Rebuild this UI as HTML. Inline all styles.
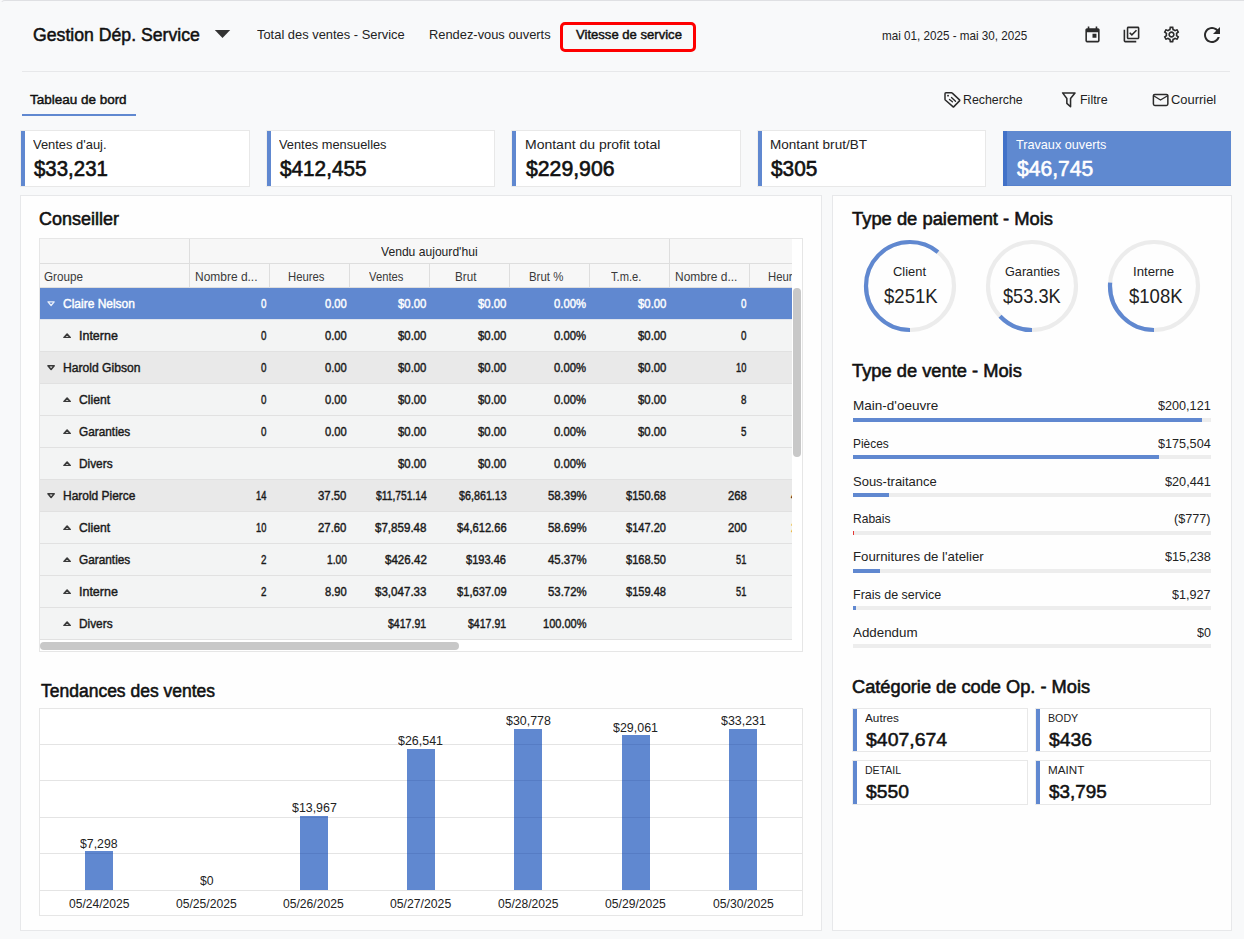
<!DOCTYPE html>
<html><head><meta charset="utf-8"><title>Gestion Dép. Service</title>
<style>
*{box-sizing:border-box;margin:0;padding:0}
html,body{width:1244px;height:939px;overflow:hidden}
body{background:#f8f9fa;font-family:"Liberation Sans",sans-serif;color:#111;position:relative}
.t{position:absolute;white-space:nowrap;line-height:1;transform-origin:0 0}
#frame{position:absolute;left:0;top:0;width:1300px;height:1000px;border-top:1px solid #dfe0e3;border-left:1px solid rgba(223,224,227,0);border-radius:5px 0 0 0}
</style></head><body>
<div id="frame"></div>
<span class="t" style="left:32.95px;top:26px;font-size:18.8px;color:#111;transform:scaleX(0.9401);-webkit-text-stroke:0.53px #111;">Gestion Dép. Service</span>
<svg style="position:absolute;left:212px;top:28px" width="22" height="12" viewBox="212 28 22 12"><path d="M214.800 29.900h15.400l-7.700 8.200z" fill="#333"/></svg>
<span class="t" style="left:256.60px;top:29px;font-size:12.8px;color:#222;transform:scaleX(1.0078);">Total des ventes - Service</span>
<span class="t" style="left:428.90px;top:29px;font-size:12.8px;color:#222;transform:scaleX(1.0054);">Rendez-vous ouverts</span>
<div style="position:absolute;left:560px;top:22px;width:136px;height:29.6px;border:3px solid #fe0000;border-radius:5px"></div>
<span class="t" style="left:575.82px;top:29px;font-size:12.8px;color:#111;transform:scaleX(1.0223);-webkit-text-stroke:0.44px #111;">Vitesse de service</span>
<span class="t" style="left:882.20px;top:30px;font-size:12.2px;color:#222;transform:scaleX(0.9571);">mai 01, 2025 - mai 30, 2025</span>
<svg style="position:absolute;left:1082.5px;top:25px" width="19" height="19" viewBox="0 0 24 24"><path fill="#2b2b2b" d="M19 4h-1V2h-2v2H8V2H6v2H5c-1.11 0-1.99.9-1.99 2L3 20c0 1.1.89 2 2 2h14c1.1 0 2-.9 2-2V6c0-1.1-.9-2-2-2zm0 16H5V9h14v11zm-7-9h5v5h-5z"/></svg>
<svg style="position:absolute;left:1122.3px;top:25px" width="19" height="19" viewBox="0 0 24 24"><path fill="#2b2b2b" d="M20 4v12H8V4h12m0-2H8c-1.1 0-2 .9-2 2v12c0 1.1.9 2 2 2h12c1.1 0 2-.9 2-2V4c0-1.1-.9-2-2-2zm-7.530 12L9 10.500l1.400-1.410 2.070 2.080L17.600 6 19 7.410 12.470 14zM4 6H2v14c0 1.100.9 2 2 2h14v-2H4V6z"/></svg>
<svg style="position:absolute;left:1162.1px;top:25px" width="19" height="19" viewBox="0 0 24 24"><path fill="#2b2b2b" d="M19.43 12.98c.04-.32.07-.64.07-.98 0-.34-.03-.66-.07-.98l2.110-1.650c.19-.15.24-.42.12-.64l-2-3.460c-.09-.16-.26-.25-.44-.25-.06 0-.12.010-.17.030l-2.490 1c-.52-.4-1.080-.73-1.690-.98l-.38-2.650C14.460 2.180 14.250 2 14 2h-4c-.25 0-.46.180-.49.420l-.38 2.650c-.61.250-1.170.59-1.690.98l-2.490-1c-.06-.02-.12-.03-.18-.03-.17 0-.34.090-.43.250l-2 3.460c-.13.220-.07.490.12.640l2.110 1.650c-.04.320-.07.650-.07.980 0 .33.030.66.070.98l-2.110 1.650c-.19.150-.24.420-.12.640l2 3.460c.09.160.26.250.44.250.06 0 .12-.01.17-.03l2.490-1c.52.4 1.080.73 1.690.98l.38 2.650c.03.240.24.420.49.420h4c.25 0 .46-.18.490-.42l.38-2.650c.61-.25 1.170-.59 1.690-.98l2.490 1c.06.020.12.030.18.030.17 0 .34-.09.43-.25l2-3.460c.12-.22.070-.49-.12-.64l-2.110-1.650zm-1.980-1.710c.04.310.05.520.05.730 0 .21-.02.430-.05.730l-.14 1.130.89.700 1.080.84-.7 1.210-1.270-.51-1.040-.42-.9.680c-.43.320-.84.560-1.250.73l-1.060.43-.16 1.130-.2 1.350h-1.400l-.19-1.350-.16-1.130-1.060-.43c-.43-.18-.83-.41-1.230-.71l-.91-.7-1.060.43-1.270.51-.7-1.210 1.080-.84.890-.7-.14-1.130c-.03-.31-.05-.54-.05-.74s.02-.43.050-.73l.14-1.130-.89-.7-1.080-.84.7-1.210 1.270.51 1.040.42.9-.68c.43-.32.840-.56 1.250-.73l1.060-.43.160-1.130.2-1.350h1.390l.19 1.350.16 1.130 1.060.43c.43.180.83.410 1.230.71l.91.7 1.060-.43 1.270-.51.7 1.210-1.070.85-.89.700.14 1.130zM12 8c-2.210 0-4 1.790-4 4s1.790 4 4 4 4-1.790 4-4-1.790-4-4-4zm0 6c-1.100 0-2-.9-2-2s.9-2 2-2 2 .9 2 2-.9 2-2 2z"/></svg>
<svg style="position:absolute;left:1200.2px;top:22.8px" width="24" height="24" viewBox="0 0 24 24"><path fill="#2b2b2b" d="M17.65 6.35C16.2 4.9 14.21 4 12 4c-4.420 0-7.990 3.580-7.990 8s3.570 8 7.990 8c3.730 0 6.840-2.550 7.730-6h-2.080c-.82 2.330-3.040 4-5.650 4-3.310 0-6-2.690-6-6s2.690-6 6-6c1.660 0 3.140.69 4.220 1.780L13 11h7V4l-2.350 2.350z"/></svg>
<div style="position:absolute;left:22px;top:71px;width:1208px;height:1px;background:#e7e8ea"></div>
<span class="t" style="left:30.33px;top:93px;font-size:13.6px;color:#111;transform:scaleX(0.9908);-webkit-text-stroke:0.46px #111;">Tableau de bord</span>
<div style="position:absolute;left:22px;top:114px;width:114px;height:2px;background:#6088d0"></div>
<svg style="position:absolute;left:940px;top:88px" width="240" height="24" viewBox="940 88 240 24"><g fill="none" stroke="#2b2b2b" stroke-width="1.5" stroke-linejoin="round" stroke-linecap="round">
<path d="M945.9 92.800h5.700q0.400 0 0.700 0.300l7.200 6.800q0.500 0.500 0 1l-5.600 5.700q-0.500 0.500-1 0l-7.600-6.600q-0.300-0.300-0.300-0.700v-5.600q0-0.900 0.900-0.900z"/>
<path d="M951.500 97.500l4 3.700M949.500 99.500l2.900 2.300" stroke-width="1.350"/>
<path d="M1062.600 92.900h12.400l-4.450 5.600v8.300l-3.700-3.400v-4.900z" stroke-width="1.550"/>
<rect x="1153.400" y="94.450" width="14.450" height="11" rx="1.400"/>
<path d="M1153.600 95.750l6.900 4.250 7.100-4.250" stroke-width="1.400"/></g>
<circle cx="948.050" cy="95.650" r="0.950" fill="#2b2b2b"/></svg>
<span class="t" style="left:962.80px;top:93px;font-size:13.1px;color:#222;transform:scaleX(0.9424);">Recherche</span>
<span class="t" style="left:1079.50px;top:93px;font-size:13.1px;color:#222;transform:scaleX(0.9516);">Filtre</span>
<span class="t" style="left:1170.90px;top:93px;font-size:13.1px;color:#222;transform:scaleX(0.9855);">Courriel</span>
<div style="position:absolute;left:20px;top:130px;width:230px;height:57px;background:#fff;border:1px solid #e8e8e8;border-left-color:#f1f0ee"><div style="position:absolute;left:0px;top:0px;width:4px;height:55px;background:#6088d0"></div></div>
<span class="t" style="left:33.20px;top:138px;font-size:13.4px;color:#222;transform:scaleX(0.9644);">Ventes d'auj.</span>
<span class="t" style="left:34.19px;top:157px;font-size:22.8px;color:#111;transform:scaleX(0.8969);-webkit-text-stroke:0.64px #111;">$33,231</span>
<div style="position:absolute;left:266px;top:130px;width:229px;height:57px;background:#fff;border:1px solid #e8e8e8;border-left-color:#f1f0ee"><div style="position:absolute;left:0px;top:0px;width:4px;height:55px;background:#6088d0"></div></div>
<span class="t" style="left:278.60px;top:138px;font-size:13.4px;color:#222;transform:scaleX(0.9566);">Ventes mensuelles</span>
<span class="t" style="left:279.59px;top:157px;font-size:22.8px;color:#111;transform:scaleX(0.9098);-webkit-text-stroke:0.64px #111;">$412,455</span>
<div style="position:absolute;left:511px;top:130px;width:230px;height:57px;background:#fff;border:1px solid #e8e8e8;border-left-color:#f1f0ee"><div style="position:absolute;left:0px;top:0px;width:4px;height:55px;background:#6088d0"></div></div>
<span class="t" style="left:524.60px;top:138px;font-size:13.4px;color:#222;transform:scaleX(1.0447);">Montant du profit total</span>
<span class="t" style="left:525.60px;top:157px;font-size:22.8px;color:#111;transform:scaleX(0.9307);-webkit-text-stroke:0.64px #111;">$229,906</span>
<div style="position:absolute;left:757px;top:130px;width:229px;height:57px;background:#fff;border:1px solid #e8e8e8;border-left-color:#f1f0ee"><div style="position:absolute;left:0px;top:0px;width:4px;height:55px;background:#6088d0"></div></div>
<span class="t" style="left:770.10px;top:138px;font-size:13.4px;color:#222;transform:scaleX(1.0096);">Montant brut/BT</span>
<span class="t" style="left:771.09px;top:157px;font-size:22.8px;color:#111;transform:scaleX(0.9130);-webkit-text-stroke:0.64px #111;">$305</span>
<div style="position:absolute;left:1002px;top:130px;width:230px;height:57px;background:#5f89d0;border:1px solid #f9f8f5"><div style="position:absolute;left:0px;top:0px;width:4px;height:55px;background:#4272c8"></div><div style="position:absolute;left:0px;top:54px;width:228px;height:1px;background:rgba(60,100,190,.22)"></div></div>
<span class="t" style="left:1015.90px;top:138px;font-size:13.4px;color:#fff;transform:scaleX(0.9449);">Travaux ouverts</span>
<span class="t" style="left:1017.20px;top:157px;font-size:22.8px;color:#fff;transform:scaleX(0.9246);-webkit-text-stroke:0.64px #fff;">$46,745</span>
<div style="position:absolute;left:20px;top:195px;width:802px;height:736px;background:#fefefe;border:1px solid #e7e8ea"></div>
<div style="position:absolute;left:832px;top:195px;width:400px;height:736px;background:#fefefe;border:1px solid #e7e8ea"></div>
<span class="t" style="left:39.28px;top:211px;font-size:17.6px;color:#111;transform:scaleX(1.0216);-webkit-text-stroke:0.55px #111;">Conseiller</span>
<span class="t" style="left:41.47px;top:683px;font-size:17.6px;color:#111;transform:scaleX(0.9944);-webkit-text-stroke:0.55px #111;">Tendances des ventes</span>
<span class="t" style="left:851.78px;top:211px;font-size:17.6px;color:#111;transform:scaleX(1.0436);-webkit-text-stroke:0.55px #111;">Type de paiement - Mois</span>
<span class="t" style="left:851.58px;top:363px;font-size:17.6px;color:#111;transform:scaleX(1.0396);-webkit-text-stroke:0.55px #111;">Type de vente - Mois</span>
<span class="t" style="left:851.78px;top:679px;font-size:17.6px;color:#111;transform:scaleX(1.0359);-webkit-text-stroke:0.55px #111;">Catégorie de code Op. - Mois</span>
<div style="position:absolute;left:39px;top:238px;width:764px;height:414px;background:#fff;border:1px solid #e6e6e6"></div>
<div style="position:absolute;left:40px;top:239px;width:752px;height:412px;overflow:hidden;background:#fff"><div style="position:absolute;left:0px;top:0px;width:150px;height:25px;background:#f7f7f7;border-bottom:1px solid #dedede;border-right:1px solid #dedede;"></div>
<div style="position:absolute;left:150px;top:0px;width:480px;height:25px;background:#f7f7f7;border-bottom:1px solid #dedede;border-right:1px solid #dedede;"></div>
<div style="position:absolute;left:630px;top:0px;width:200px;height:25px;background:#f7f7f7;border-bottom:1px solid #dedede;"></div>
<div style="position:absolute;left:0px;top:25px;width:150px;height:24px;background:#f7f7f7;border-bottom:1px solid #dedede;border-right:1px solid #dedede;"></div>
<div style="position:absolute;left:150px;top:25px;width:80px;height:24px;background:#f7f7f7;border-bottom:1px solid #dedede;border-right:1px solid #dedede;"></div>
<div style="position:absolute;left:230px;top:25px;width:80px;height:24px;background:#f7f7f7;border-bottom:1px solid #dedede;border-right:1px solid #dedede;"></div>
<div style="position:absolute;left:310px;top:25px;width:80px;height:24px;background:#f7f7f7;border-bottom:1px solid #dedede;border-right:1px solid #dedede;"></div>
<div style="position:absolute;left:390px;top:25px;width:80px;height:24px;background:#f7f7f7;border-bottom:1px solid #dedede;border-right:1px solid #dedede;"></div>
<div style="position:absolute;left:470px;top:25px;width:80px;height:24px;background:#f7f7f7;border-bottom:1px solid #dedede;border-right:1px solid #dedede;"></div>
<div style="position:absolute;left:550px;top:25px;width:80px;height:24px;background:#f7f7f7;border-bottom:1px solid #dedede;border-right:1px solid #dedede;"></div>
<div style="position:absolute;left:630px;top:25px;width:80px;height:24px;background:#f7f7f7;border-bottom:1px solid #dedede;border-right:1px solid #dedede;"></div>
<div style="position:absolute;left:710px;top:25px;width:80px;height:24px;background:#f7f7f7;border-bottom:1px solid #dedede;border-right:1px solid #dedede;"></div>
<span class="t" style="left:341.20px;top:6px;font-size:13px;color:#222;transform:scaleX(0.9316);">Vendu aujourd'hui</span>
<span class="t" style="left:4.30px;top:31px;font-size:13px;color:#3a3a3a;transform:scaleX(0.8972);">Groupe</span>
<span class="t" style="left:154.80px;top:31px;font-size:13px;color:#3a3a3a;transform:scaleX(0.9203);">Nombre d...</span>
<span class="t" style="left:247.60px;top:31px;font-size:13px;color:#3a3a3a;transform:scaleX(0.8709);">Heures</span>
<span class="t" style="left:328.70px;top:31px;font-size:13px;color:#3a3a3a;transform:scaleX(0.8653);">Ventes</span>
<span class="t" style="left:415.30px;top:31px;font-size:13px;color:#3a3a3a;transform:scaleX(0.8976);">Brut</span>
<span class="t" style="left:488.90px;top:31px;font-size:13px;color:#3a3a3a;transform:scaleX(0.8792);">Brut %</span>
<span class="t" style="left:570.90px;top:31px;font-size:13px;color:#3a3a3a;transform:scaleX(0.8588);">T.m.e.</span>
<span class="t" style="left:634.80px;top:31px;font-size:13px;color:#3a3a3a;transform:scaleX(0.9188);">Nombre d...</span>
<span class="t" style="left:727.50px;top:31px;font-size:13px;color:#3a3a3a;transform:scaleX(0.8709);">Heures</span>
<div style="position:absolute;left:0px;top:49px;width:760px;height:32px;background:#6088d0;border-bottom:1px solid #dfe4ee"></div>
<svg style="position:absolute;left:7.0px;top:61.80000000000001px" width="8.2" height="5.8" viewBox="0 0 8.200 5.800"><path d="M1 0.800h6.200L4.100 4.500z" fill="none" stroke="#e9effa" stroke-width="1.3" stroke-linejoin="round"/></svg>
<span class="t" style="left:22.90px;top:59px;font-size:12.4px;color:#fff;transform:scaleX(0.9673);-webkit-text-stroke:0.42px #fff;">Claire Nelson</span>
<span class="t" style="left:221.07px;top:59px;font-size:12.4px;color:#fff;transform:scaleX(0.7928);-webkit-text-stroke:0.42px #fff;">0</span>
<span class="t" style="left:284.74px;top:59px;font-size:12.4px;color:#fff;transform:scaleX(0.9022);-webkit-text-stroke:0.42px #fff;">0.00</span>
<span class="t" style="left:358.04px;top:59px;font-size:12.4px;color:#fff;transform:scaleX(0.9174);-webkit-text-stroke:0.42px #fff;">$0.00</span>
<span class="t" style="left:438.04px;top:59px;font-size:12.4px;color:#fff;transform:scaleX(0.9174);-webkit-text-stroke:0.42px #fff;">$0.00</span>
<span class="t" style="left:514.49px;top:59px;font-size:12.4px;color:#fff;transform:scaleX(0.9107);-webkit-text-stroke:0.42px #fff;">0.00%</span>
<span class="t" style="left:598.04px;top:59px;font-size:12.4px;color:#fff;transform:scaleX(0.9174);-webkit-text-stroke:0.42px #fff;">$0.00</span>
<span class="t" style="left:701.07px;top:59px;font-size:12.4px;color:#fff;transform:scaleX(0.7928);-webkit-text-stroke:0.42px #fff;">0</span>
<div style="position:absolute;left:0px;top:81px;width:760px;height:32px;background:#f3f4f4;border-bottom:1px solid #e1e1e1"></div>
<svg style="position:absolute;left:23.0px;top:93.89999999999998px" width="8.2" height="5.400" viewBox="0 0 8.200 5.400"><path d="M1 4.450h6.200L4.100 1z" fill="none" stroke="#3a3a3a" stroke-width="1.600" stroke-linejoin="round"/></svg>
<span class="t" style="left:39.01px;top:91px;font-size:12.4px;color:#1a1a1a;transform:scaleX(1.0071);-webkit-text-stroke:0.42px #1a1a1a;">Interne</span>
<span class="t" style="left:221.07px;top:91px;font-size:12.4px;color:#1a1a1a;transform:scaleX(0.7928);-webkit-text-stroke:0.42px #1a1a1a;">0</span>
<span class="t" style="left:284.74px;top:91px;font-size:12.4px;color:#1a1a1a;transform:scaleX(0.9022);-webkit-text-stroke:0.42px #1a1a1a;">0.00</span>
<span class="t" style="left:358.04px;top:91px;font-size:12.4px;color:#1a1a1a;transform:scaleX(0.9174);-webkit-text-stroke:0.42px #1a1a1a;">$0.00</span>
<span class="t" style="left:438.04px;top:91px;font-size:12.4px;color:#1a1a1a;transform:scaleX(0.9174);-webkit-text-stroke:0.42px #1a1a1a;">$0.00</span>
<span class="t" style="left:514.49px;top:91px;font-size:12.4px;color:#1a1a1a;transform:scaleX(0.9107);-webkit-text-stroke:0.42px #1a1a1a;">0.00%</span>
<span class="t" style="left:598.04px;top:91px;font-size:12.4px;color:#1a1a1a;transform:scaleX(0.9174);-webkit-text-stroke:0.42px #1a1a1a;">$0.00</span>
<span class="t" style="left:701.07px;top:91px;font-size:12.4px;color:#1a1a1a;transform:scaleX(0.7928);-webkit-text-stroke:0.42px #1a1a1a;">0</span>
<div style="position:absolute;left:0px;top:113px;width:760px;height:32px;background:#e9e9e9;border-bottom:1px solid #e1e1e1"></div>
<svg style="position:absolute;left:7.0px;top:125.80000000000001px" width="8.2" height="5.8" viewBox="0 0 8.200 5.800"><path d="M1 0.800h6.200L4.100 4.500z" fill="none" stroke="#3a3a3a" stroke-width="1.6" stroke-linejoin="round"/></svg>
<span class="t" style="left:23.31px;top:123px;font-size:12.4px;color:#1a1a1a;transform:scaleX(0.9776);-webkit-text-stroke:0.42px #1a1a1a;">Harold Gibson</span>
<span class="t" style="left:221.07px;top:123px;font-size:12.4px;color:#1a1a1a;transform:scaleX(0.7928);-webkit-text-stroke:0.42px #1a1a1a;">0</span>
<span class="t" style="left:284.74px;top:123px;font-size:12.4px;color:#1a1a1a;transform:scaleX(0.9022);-webkit-text-stroke:0.42px #1a1a1a;">0.00</span>
<span class="t" style="left:358.04px;top:123px;font-size:12.4px;color:#1a1a1a;transform:scaleX(0.9174);-webkit-text-stroke:0.42px #1a1a1a;">$0.00</span>
<span class="t" style="left:438.04px;top:123px;font-size:12.4px;color:#1a1a1a;transform:scaleX(0.9174);-webkit-text-stroke:0.42px #1a1a1a;">$0.00</span>
<span class="t" style="left:514.49px;top:123px;font-size:12.4px;color:#1a1a1a;transform:scaleX(0.9107);-webkit-text-stroke:0.42px #1a1a1a;">0.00%</span>
<span class="t" style="left:598.04px;top:123px;font-size:12.4px;color:#1a1a1a;transform:scaleX(0.9174);-webkit-text-stroke:0.42px #1a1a1a;">$0.00</span>
<span class="t" style="left:696.21px;top:123px;font-size:12.4px;color:#1a1a1a;transform:scaleX(0.7495);-webkit-text-stroke:0.42px #1a1a1a;">10</span>
<div style="position:absolute;left:0px;top:145px;width:760px;height:32px;background:#f3f4f4;border-bottom:1px solid #e1e1e1"></div>
<svg style="position:absolute;left:23.0px;top:157.89999999999998px" width="8.2" height="5.400" viewBox="0 0 8.200 5.400"><path d="M1 4.450h6.200L4.100 1z" fill="none" stroke="#3a3a3a" stroke-width="1.600" stroke-linejoin="round"/></svg>
<span class="t" style="left:38.81px;top:155px;font-size:12.4px;color:#1a1a1a;transform:scaleX(0.9804);-webkit-text-stroke:0.42px #1a1a1a;">Client</span>
<span class="t" style="left:221.07px;top:155px;font-size:12.4px;color:#1a1a1a;transform:scaleX(0.7928);-webkit-text-stroke:0.42px #1a1a1a;">0</span>
<span class="t" style="left:284.74px;top:155px;font-size:12.4px;color:#1a1a1a;transform:scaleX(0.9022);-webkit-text-stroke:0.42px #1a1a1a;">0.00</span>
<span class="t" style="left:358.04px;top:155px;font-size:12.4px;color:#1a1a1a;transform:scaleX(0.9174);-webkit-text-stroke:0.42px #1a1a1a;">$0.00</span>
<span class="t" style="left:438.04px;top:155px;font-size:12.4px;color:#1a1a1a;transform:scaleX(0.9174);-webkit-text-stroke:0.42px #1a1a1a;">$0.00</span>
<span class="t" style="left:514.49px;top:155px;font-size:12.4px;color:#1a1a1a;transform:scaleX(0.9107);-webkit-text-stroke:0.42px #1a1a1a;">0.00%</span>
<span class="t" style="left:598.04px;top:155px;font-size:12.4px;color:#1a1a1a;transform:scaleX(0.9174);-webkit-text-stroke:0.42px #1a1a1a;">$0.00</span>
<span class="t" style="left:701.07px;top:155px;font-size:12.4px;color:#1a1a1a;transform:scaleX(0.7928);-webkit-text-stroke:0.42px #1a1a1a;">8</span>
<div style="position:absolute;left:0px;top:177px;width:760px;height:32px;background:#f3f4f4;border-bottom:1px solid #e1e1e1"></div>
<svg style="position:absolute;left:23.0px;top:189.89999999999998px" width="8.2" height="5.400" viewBox="0 0 8.200 5.400"><path d="M1 4.450h6.200L4.100 1z" fill="none" stroke="#3a3a3a" stroke-width="1.600" stroke-linejoin="round"/></svg>
<span class="t" style="left:38.80px;top:187px;font-size:12.4px;color:#1a1a1a;transform:scaleX(0.9543);-webkit-text-stroke:0.42px #1a1a1a;">Garanties</span>
<span class="t" style="left:221.07px;top:187px;font-size:12.4px;color:#1a1a1a;transform:scaleX(0.7928);-webkit-text-stroke:0.42px #1a1a1a;">0</span>
<span class="t" style="left:284.74px;top:187px;font-size:12.4px;color:#1a1a1a;transform:scaleX(0.9022);-webkit-text-stroke:0.42px #1a1a1a;">0.00</span>
<span class="t" style="left:358.04px;top:187px;font-size:12.4px;color:#1a1a1a;transform:scaleX(0.9174);-webkit-text-stroke:0.42px #1a1a1a;">$0.00</span>
<span class="t" style="left:438.04px;top:187px;font-size:12.4px;color:#1a1a1a;transform:scaleX(0.9174);-webkit-text-stroke:0.42px #1a1a1a;">$0.00</span>
<span class="t" style="left:514.49px;top:187px;font-size:12.4px;color:#1a1a1a;transform:scaleX(0.9107);-webkit-text-stroke:0.42px #1a1a1a;">0.00%</span>
<span class="t" style="left:598.04px;top:187px;font-size:12.4px;color:#1a1a1a;transform:scaleX(0.9174);-webkit-text-stroke:0.42px #1a1a1a;">$0.00</span>
<span class="t" style="left:701.07px;top:187px;font-size:12.4px;color:#1a1a1a;transform:scaleX(0.7928);-webkit-text-stroke:0.42px #1a1a1a;">5</span>
<div style="position:absolute;left:0px;top:209px;width:760px;height:32px;background:#f3f4f4;border-bottom:1px solid #e1e1e1"></div>
<svg style="position:absolute;left:23.0px;top:221.89999999999998px" width="8.2" height="5.400" viewBox="0 0 8.200 5.400"><path d="M1 4.450h6.200L4.100 1z" fill="none" stroke="#3a3a3a" stroke-width="1.600" stroke-linejoin="round"/></svg>
<span class="t" style="left:39.00px;top:219px;font-size:12.4px;color:#1a1a1a;transform:scaleX(0.9560);-webkit-text-stroke:0.42px #1a1a1a;">Divers</span>
<span class="t" style="left:358.04px;top:219px;font-size:12.4px;color:#1a1a1a;transform:scaleX(0.9174);-webkit-text-stroke:0.42px #1a1a1a;">$0.00</span>
<span class="t" style="left:438.04px;top:219px;font-size:12.4px;color:#1a1a1a;transform:scaleX(0.9174);-webkit-text-stroke:0.42px #1a1a1a;">$0.00</span>
<span class="t" style="left:514.49px;top:219px;font-size:12.4px;color:#1a1a1a;transform:scaleX(0.9107);-webkit-text-stroke:0.42px #1a1a1a;">0.00%</span>
<div style="position:absolute;left:0px;top:241px;width:760px;height:32px;background:#e9e9e9;border-bottom:1px solid #e1e1e1"></div>
<svg style="position:absolute;left:7.0px;top:253.8px" width="8.2" height="5.8" viewBox="0 0 8.200 5.800"><path d="M1 0.800h6.200L4.100 4.500z" fill="none" stroke="#3a3a3a" stroke-width="1.6" stroke-linejoin="round"/></svg>
<span class="t" style="left:23.00px;top:251px;font-size:12.4px;color:#1a1a1a;transform:scaleX(0.9650);-webkit-text-stroke:0.42px #1a1a1a;">Harold Pierce</span>
<span class="t" style="left:216.21px;top:251px;font-size:12.4px;color:#1a1a1a;transform:scaleX(0.7495);-webkit-text-stroke:0.42px #1a1a1a;">14</span>
<span class="t" style="left:278.04px;top:251px;font-size:12.4px;color:#1a1a1a;transform:scaleX(0.9174);-webkit-text-stroke:0.42px #1a1a1a;">37.50</span>
<span class="t" style="left:335.68px;top:251px;font-size:12.4px;color:#1a1a1a;transform:scaleX(0.8316);-webkit-text-stroke:0.42px #1a1a1a;">$11,751.14</span>
<span class="t" style="left:418.68px;top:251px;font-size:12.4px;color:#1a1a1a;transform:scaleX(0.8671);-webkit-text-stroke:0.42px #1a1a1a;">$6,861.13</span>
<span class="t" style="left:507.79px;top:251px;font-size:12.4px;color:#1a1a1a;transform:scaleX(0.9204);-webkit-text-stroke:0.42px #1a1a1a;">58.39%</span>
<span class="t" style="left:586.49px;top:251px;font-size:12.4px;color:#1a1a1a;transform:scaleX(0.8929);-webkit-text-stroke:0.42px #1a1a1a;">$150.68</span>
<span class="t" style="left:687.69px;top:251px;font-size:12.4px;color:#1a1a1a;transform:scaleX(0.9097);-webkit-text-stroke:0.42px #1a1a1a;">268</span>
<span class="t" style="left:750.79px;top:251px;font-size:12.4px;color:#3a2a1a;transform:scaleX(0.8787);-webkit-text-stroke:0.42px #3a2a1a;">471.20</span>
<div style="position:absolute;left:0px;top:273px;width:760px;height:32px;background:#f3f4f4;border-bottom:1px solid #e1e1e1"></div>
<svg style="position:absolute;left:23.0px;top:285.9px" width="8.2" height="5.400" viewBox="0 0 8.200 5.400"><path d="M1 4.450h6.200L4.100 1z" fill="none" stroke="#3a3a3a" stroke-width="1.600" stroke-linejoin="round"/></svg>
<span class="t" style="left:38.81px;top:283px;font-size:12.4px;color:#1a1a1a;transform:scaleX(0.9804);-webkit-text-stroke:0.42px #1a1a1a;">Client</span>
<span class="t" style="left:216.21px;top:283px;font-size:12.4px;color:#1a1a1a;transform:scaleX(0.7495);-webkit-text-stroke:0.42px #1a1a1a;">10</span>
<span class="t" style="left:278.04px;top:283px;font-size:12.4px;color:#1a1a1a;transform:scaleX(0.9174);-webkit-text-stroke:0.42px #1a1a1a;">27.60</span>
<span class="t" style="left:335.00px;top:283px;font-size:12.4px;color:#1a1a1a;transform:scaleX(0.9336);-webkit-text-stroke:0.42px #1a1a1a;">$7,859.48</span>
<span class="t" style="left:416.84px;top:283px;font-size:12.4px;color:#1a1a1a;transform:scaleX(0.9004);-webkit-text-stroke:0.42px #1a1a1a;">$4,612.66</span>
<span class="t" style="left:507.79px;top:283px;font-size:12.4px;color:#1a1a1a;transform:scaleX(0.9204);-webkit-text-stroke:0.42px #1a1a1a;">58.69%</span>
<span class="t" style="left:586.49px;top:283px;font-size:12.4px;color:#1a1a1a;transform:scaleX(0.8929);-webkit-text-stroke:0.42px #1a1a1a;">$147.20</span>
<span class="t" style="left:687.69px;top:283px;font-size:12.4px;color:#1a1a1a;transform:scaleX(0.9097);-webkit-text-stroke:0.42px #1a1a1a;">200</span>
<span class="t" style="left:751.49px;top:283px;font-size:12.4px;color:#e8a23c;transform:scaleX(0.8787);-webkit-text-stroke:0.42px #e8a23c;">271.20</span>
<div style="position:absolute;left:0px;top:305px;width:760px;height:32px;background:#f3f4f4;border-bottom:1px solid #e1e1e1"></div>
<svg style="position:absolute;left:23.0px;top:317.9px" width="8.2" height="5.400" viewBox="0 0 8.200 5.400"><path d="M1 4.450h6.200L4.100 1z" fill="none" stroke="#3a3a3a" stroke-width="1.600" stroke-linejoin="round"/></svg>
<span class="t" style="left:38.80px;top:315px;font-size:12.4px;color:#1a1a1a;transform:scaleX(0.9543);-webkit-text-stroke:0.42px #1a1a1a;">Garanties</span>
<span class="t" style="left:221.07px;top:315px;font-size:12.4px;color:#1a1a1a;transform:scaleX(0.7928);-webkit-text-stroke:0.42px #1a1a1a;">2</span>
<span class="t" style="left:286.57px;top:315px;font-size:12.4px;color:#1a1a1a;transform:scaleX(0.8268);-webkit-text-stroke:0.42px #1a1a1a;">1.00</span>
<span class="t" style="left:344.65px;top:315px;font-size:12.4px;color:#1a1a1a;transform:scaleX(0.9338);-webkit-text-stroke:0.42px #1a1a1a;">$426.42</span>
<span class="t" style="left:426.49px;top:315px;font-size:12.4px;color:#1a1a1a;transform:scaleX(0.8929);-webkit-text-stroke:0.42px #1a1a1a;">$193.46</span>
<span class="t" style="left:507.79px;top:315px;font-size:12.4px;color:#1a1a1a;transform:scaleX(0.9204);-webkit-text-stroke:0.42px #1a1a1a;">45.37%</span>
<span class="t" style="left:586.49px;top:315px;font-size:12.4px;color:#1a1a1a;transform:scaleX(0.8929);-webkit-text-stroke:0.42px #1a1a1a;">$168.50</span>
<span class="t" style="left:696.21px;top:315px;font-size:12.4px;color:#1a1a1a;transform:scaleX(0.7495);-webkit-text-stroke:0.42px #1a1a1a;">51</span>
<div style="position:absolute;left:0px;top:337px;width:760px;height:32px;background:#f3f4f4;border-bottom:1px solid #e1e1e1"></div>
<svg style="position:absolute;left:23.0px;top:349.9px" width="8.2" height="5.400" viewBox="0 0 8.200 5.400"><path d="M1 4.450h6.200L4.100 1z" fill="none" stroke="#3a3a3a" stroke-width="1.600" stroke-linejoin="round"/></svg>
<span class="t" style="left:39.01px;top:347px;font-size:12.4px;color:#1a1a1a;transform:scaleX(1.0071);-webkit-text-stroke:0.42px #1a1a1a;">Interne</span>
<span class="t" style="left:221.07px;top:347px;font-size:12.4px;color:#1a1a1a;transform:scaleX(0.7928);-webkit-text-stroke:0.42px #1a1a1a;">2</span>
<span class="t" style="left:284.74px;top:347px;font-size:12.4px;color:#1a1a1a;transform:scaleX(0.9022);-webkit-text-stroke:0.42px #1a1a1a;">8.90</span>
<span class="t" style="left:335.00px;top:347px;font-size:12.4px;color:#1a1a1a;transform:scaleX(0.9336);-webkit-text-stroke:0.42px #1a1a1a;">$3,047.33</span>
<span class="t" style="left:416.84px;top:347px;font-size:12.4px;color:#1a1a1a;transform:scaleX(0.9004);-webkit-text-stroke:0.42px #1a1a1a;">$1,637.09</span>
<span class="t" style="left:507.79px;top:347px;font-size:12.4px;color:#1a1a1a;transform:scaleX(0.9204);-webkit-text-stroke:0.42px #1a1a1a;">53.72%</span>
<span class="t" style="left:586.49px;top:347px;font-size:12.4px;color:#1a1a1a;transform:scaleX(0.8929);-webkit-text-stroke:0.42px #1a1a1a;">$159.48</span>
<span class="t" style="left:696.21px;top:347px;font-size:12.4px;color:#1a1a1a;transform:scaleX(0.7495);-webkit-text-stroke:0.42px #1a1a1a;">51</span>
<div style="position:absolute;left:0px;top:369px;width:760px;height:32px;background:#f3f4f4;border-bottom:1px solid #e1e1e1"></div>
<svg style="position:absolute;left:23.0px;top:381.9px" width="8.2" height="5.400" viewBox="0 0 8.200 5.400"><path d="M1 4.450h6.200L4.100 1z" fill="none" stroke="#3a3a3a" stroke-width="1.600" stroke-linejoin="round"/></svg>
<span class="t" style="left:39.00px;top:379px;font-size:12.4px;color:#1a1a1a;transform:scaleX(0.9560);-webkit-text-stroke:0.42px #1a1a1a;">Divers</span>
<span class="t" style="left:348.33px;top:379px;font-size:12.4px;color:#1a1a1a;transform:scaleX(0.8520);-webkit-text-stroke:0.42px #1a1a1a;">$417.91</span>
<span class="t" style="left:428.33px;top:379px;font-size:12.4px;color:#1a1a1a;transform:scaleX(0.8520);-webkit-text-stroke:0.42px #1a1a1a;">$417.91</span>
<span class="t" style="left:502.94px;top:379px;font-size:12.4px;color:#1a1a1a;transform:scaleX(0.8901);-webkit-text-stroke:0.42px #1a1a1a;">100.00%</span>
<div style="position:absolute;left:0px;top:403px;width:419px;height:8px;background:#c8c8c8;border-radius:4px"></div></div>
<div style="position:absolute;left:793px;top:288px;width:8px;height:169px;background:#c8c8c8;border-radius:4px"></div>
<div style="position:absolute;left:39px;top:708px;width:764px;height:208px;background:#fff;border:1px solid #e6e6e6"></div>
<div style="position:absolute;left:40px;top:744px;width:762px;height:1px;background:#e4e4e4"></div>
<div style="position:absolute;left:40px;top:780px;width:762px;height:1px;background:#e4e4e4"></div>
<div style="position:absolute;left:40px;top:817px;width:762px;height:1px;background:#e4e4e4"></div>
<div style="position:absolute;left:40px;top:853px;width:762px;height:1px;background:#e4e4e4"></div>
<div style="position:absolute;left:40px;top:890px;width:762px;height:1px;background:#e4e4e4"></div>
<div style="position:absolute;left:85px;top:851px;width:28px;height:39px;background:#6088d0"></div>
<div style="position:absolute;left:85px;top:853px;width:28px;height:1px;background:#567cc4"></div>
<span class="t" style="left:79.80px;top:838px;font-size:12.3px;color:#222;transform:scaleX(0.9993);">$7,298</span>
<span class="t" style="left:68.60px;top:898px;font-size:12.3px;color:#222;transform:scaleX(0.9828);">05/24/2025</span>
<span class="t" style="left:199.60px;top:875px;font-size:12.3px;color:#222;transform:scaleX(0.9943);">$0</span>
<span class="t" style="left:175.70px;top:898px;font-size:12.3px;color:#222;transform:scaleX(0.9860);">05/25/2025</span>
<div style="position:absolute;left:300px;top:816px;width:28px;height:74px;background:#6088d0"></div>
<div style="position:absolute;left:300px;top:817px;width:28px;height:1px;background:#567cc4"></div>
<div style="position:absolute;left:300px;top:853px;width:28px;height:1px;background:#567cc4"></div>
<span class="t" style="left:291.50px;top:802px;font-size:12.3px;color:#222;transform:scaleX(1.0075);">$13,967</span>
<span class="t" style="left:283.00px;top:898px;font-size:12.3px;color:#222;transform:scaleX(0.9860);">05/26/2025</span>
<div style="position:absolute;left:407px;top:749px;width:28px;height:141px;background:#6088d0"></div>
<div style="position:absolute;left:407px;top:780px;width:28px;height:1px;background:#567cc4"></div>
<div style="position:absolute;left:407px;top:817px;width:28px;height:1px;background:#567cc4"></div>
<div style="position:absolute;left:407px;top:853px;width:28px;height:1px;background:#567cc4"></div>
<span class="t" style="left:398.30px;top:735px;font-size:12.3px;color:#222;transform:scaleX(1.0120);">$26,541</span>
<span class="t" style="left:390.40px;top:898px;font-size:12.3px;color:#222;transform:scaleX(0.9941);">05/27/2025</span>
<div style="position:absolute;left:514px;top:729px;width:28px;height:161px;background:#6088d0"></div>
<div style="position:absolute;left:514px;top:744px;width:28px;height:1px;background:#567cc4"></div>
<div style="position:absolute;left:514px;top:780px;width:28px;height:1px;background:#567cc4"></div>
<div style="position:absolute;left:514px;top:817px;width:28px;height:1px;background:#567cc4"></div>
<div style="position:absolute;left:514px;top:853px;width:28px;height:1px;background:#567cc4"></div>
<span class="t" style="left:506.20px;top:715px;font-size:12.3px;color:#222;transform:scaleX(1.0098);">$30,778</span>
<span class="t" style="left:498.20px;top:898px;font-size:12.3px;color:#222;transform:scaleX(0.9828);">05/28/2025</span>
<div style="position:absolute;left:622px;top:735px;width:28px;height:155px;background:#6088d0"></div>
<div style="position:absolute;left:622px;top:744px;width:28px;height:1px;background:#567cc4"></div>
<div style="position:absolute;left:622px;top:780px;width:28px;height:1px;background:#567cc4"></div>
<div style="position:absolute;left:622px;top:817px;width:28px;height:1px;background:#567cc4"></div>
<div style="position:absolute;left:622px;top:853px;width:28px;height:1px;background:#567cc4"></div>
<span class="t" style="left:613.30px;top:722px;font-size:12.3px;color:#222;transform:scaleX(1.0120);">$29,061</span>
<span class="t" style="left:605.40px;top:898px;font-size:12.3px;color:#222;transform:scaleX(0.9876);">05/29/2025</span>
<div style="position:absolute;left:729px;top:729px;width:28px;height:161px;background:#6088d0"></div>
<div style="position:absolute;left:729px;top:744px;width:28px;height:1px;background:#567cc4"></div>
<div style="position:absolute;left:729px;top:780px;width:28px;height:1px;background:#567cc4"></div>
<div style="position:absolute;left:729px;top:817px;width:28px;height:1px;background:#567cc4"></div>
<div style="position:absolute;left:729px;top:853px;width:28px;height:1px;background:#567cc4"></div>
<span class="t" style="left:720.50px;top:715px;font-size:12.3px;color:#222;transform:scaleX(1.0098);">$33,231</span>
<span class="t" style="left:712.50px;top:898px;font-size:12.3px;color:#222;transform:scaleX(0.9893);">05/30/2025</span>
<svg style="position:absolute;left:860px;top:235.89999999999998px" width="100" height="100" viewBox="0 0 100 100"><circle cx="50" cy="50" r="44" fill="none" stroke="#ececec" stroke-width="4.200"/><circle cx="50" cy="50" r="44" fill="none" stroke="#6088d0" stroke-width="4.200" stroke-dasharray="168.24 276.46" transform="rotate(90 50 50)"/></svg>
<svg style="position:absolute;left:982.2px;top:235.89999999999998px" width="100" height="100" viewBox="0 0 100 100"><circle cx="50" cy="50" r="44" fill="none" stroke="#ececec" stroke-width="4.200"/><circle cx="50" cy="50" r="44" fill="none" stroke="#6088d0" stroke-width="4.200" stroke-dasharray="35.73 276.46" transform="rotate(90 50 50)"/></svg>
<svg style="position:absolute;left:1103.9px;top:235.89999999999998px" width="100" height="100" viewBox="0 0 100 100"><circle cx="50" cy="50" r="44" fill="none" stroke="#ececec" stroke-width="4.200"/><circle cx="50" cy="50" r="44" fill="none" stroke="#6088d0" stroke-width="4.200" stroke-dasharray="72.39 276.46" transform="rotate(90 50 50)"/></svg>
<span class="t" style="left:893.30px;top:265px;font-size:13.5px;color:#222;transform:scaleX(0.9560);">Client</span>
<span class="t" style="left:883.50px;top:286px;font-size:20.2px;color:#222;transform:scaleX(0.9192);">$251K</span>
<span class="t" style="left:1004.50px;top:265px;font-size:13.5px;color:#222;transform:scaleX(0.9381);">Garanties</span>
<span class="t" style="left:1003.40px;top:286px;font-size:20.2px;color:#222;transform:scaleX(0.9014);">$53.3K</span>
<span class="t" style="left:1133.40px;top:265px;font-size:13.5px;color:#222;transform:scaleX(0.9780);">Interne</span>
<span class="t" style="left:1128.50px;top:286px;font-size:20.2px;color:#222;transform:scaleX(0.9175);">$108K</span>
<span class="t" style="left:853.30px;top:399px;font-size:13.3px;color:#222;transform:scaleX(1.0172);">Main-d'oeuvre</span>
<span class="t" style="left:1158.20px;top:399px;font-size:13.1px;color:#222;transform:scaleX(0.9645);">$200,121</span>
<div style="position:absolute;left:853px;top:418px;width:358px;height:4px;background:#ededed"><div style="position:absolute;left:0px;top:0px;width:349.1px;height:4px;background:#6088d0"></div></div>
<span class="t" style="left:853.30px;top:437px;font-size:13.3px;color:#222;transform:scaleX(0.8944);">Pièces</span>
<span class="t" style="left:1158.20px;top:437px;font-size:13.1px;color:#222;transform:scaleX(0.9645);">$175,504</span>
<div style="position:absolute;left:853px;top:455px;width:358px;height:4px;background:#ededed"><div style="position:absolute;left:0px;top:0px;width:306.1px;height:4px;background:#6088d0"></div></div>
<span class="t" style="left:853.30px;top:475px;font-size:13.3px;color:#222;transform:scaleX(0.9772);">Sous-traitance</span>
<span class="t" style="left:1165.00px;top:475px;font-size:13.1px;color:#222;transform:scaleX(0.9692);">$20,441</span>
<div style="position:absolute;left:853px;top:493px;width:358px;height:4px;background:#ededed"><div style="position:absolute;left:0px;top:0px;width:35.7px;height:4px;background:#6088d0"></div></div>
<span class="t" style="left:853.30px;top:512px;font-size:13.3px;color:#222;transform:scaleX(0.9057);">Rabais</span>
<span class="t" style="left:1174.40px;top:512px;font-size:13.1px;color:#222;transform:scaleX(0.9638);">($777)</span>
<div style="position:absolute;left:853px;top:531px;width:358px;height:4px;background:#ededed"><div style="position:absolute;left:0px;top:0px;width:1.4px;height:4px;background:#e53935"></div></div>
<span class="t" style="left:853.30px;top:550px;font-size:13.3px;color:#222;transform:scaleX(0.9965);">Fournitures de l'atelier</span>
<span class="t" style="left:1165.00px;top:550px;font-size:13.1px;color:#222;transform:scaleX(0.9692);">$15,238</span>
<div style="position:absolute;left:853px;top:569px;width:358px;height:4px;background:#ededed"><div style="position:absolute;left:0px;top:0px;width:26.6px;height:4px;background:#6088d0"></div></div>
<span class="t" style="left:853.30px;top:588px;font-size:13.3px;color:#222;transform:scaleX(0.9396);">Frais de service</span>
<span class="t" style="left:1172.40px;top:588px;font-size:13.1px;color:#222;transform:scaleX(0.9607);">$1,927</span>
<div style="position:absolute;left:853px;top:606px;width:358px;height:4px;background:#ededed"><div style="position:absolute;left:0px;top:0px;width:3.4px;height:4px;background:#6088d0"></div></div>
<span class="t" style="left:853.30px;top:626px;font-size:13.3px;color:#222;transform:scaleX(1.0042);">Addendum</span>
<span class="t" style="left:1197.00px;top:626px;font-size:13.1px;color:#222;transform:scaleX(0.9542);">$0</span>
<div style="position:absolute;left:853px;top:644px;width:358px;height:4px;background:#ededed"></div>
<div style="position:absolute;left:852px;top:708px;width:176px;height:44px;background:#fff;border:1px solid #e8e8e8;border-left-color:#f1f0ee"><div style="position:absolute;left:0px;top:0px;width:4px;height:42px;background:#6088d0"></div></div>
<span class="t" style="left:865.10px;top:712px;font-size:11.6px;color:#222;transform:scaleX(1.0142);">Autres</span>
<span class="t" style="left:865.77px;top:730px;font-size:19.2px;color:#111;transform:scaleX(1.0134);-webkit-text-stroke:0.54px #111;">$407,674</span>
<div style="position:absolute;left:1035px;top:708px;width:176px;height:44px;background:#fff;border:1px solid #e8e8e8;border-left-color:#f1f0ee"><div style="position:absolute;left:0px;top:0px;width:4px;height:42px;background:#6088d0"></div></div>
<span class="t" style="left:1048.40px;top:712px;font-size:11.6px;color:#222;transform:scaleX(0.9186);">BODY</span>
<span class="t" style="left:1049.27px;top:730px;font-size:19.2px;color:#111;transform:scaleX(1.0079);-webkit-text-stroke:0.54px #111;">$436</span>
<div style="position:absolute;left:852px;top:760px;width:176px;height:45px;background:#fff;border:1px solid #e8e8e8;border-left-color:#f1f0ee"><div style="position:absolute;left:0px;top:0px;width:4px;height:43px;background:#6088d0"></div></div>
<span class="t" style="left:865.10px;top:764px;font-size:11.6px;color:#222;transform:scaleX(0.9081);">DETAIL</span>
<span class="t" style="left:865.77px;top:782px;font-size:19.2px;color:#111;transform:scaleX(1.0056);-webkit-text-stroke:0.54px #111;">$550</span>
<div style="position:absolute;left:1035px;top:760px;width:176px;height:45px;background:#fff;border:1px solid #e8e8e8;border-left-color:#f1f0ee"><div style="position:absolute;left:0px;top:0px;width:4px;height:43px;background:#6088d0"></div></div>
<span class="t" style="left:1048.40px;top:764px;font-size:11.6px;color:#222;transform:scaleX(1.0059);">MAINT</span>
<span class="t" style="left:1049.26px;top:782px;font-size:19.2px;color:#111;transform:scaleX(0.9836);-webkit-text-stroke:0.54px #111;">$3,795</span>
</body></html>
